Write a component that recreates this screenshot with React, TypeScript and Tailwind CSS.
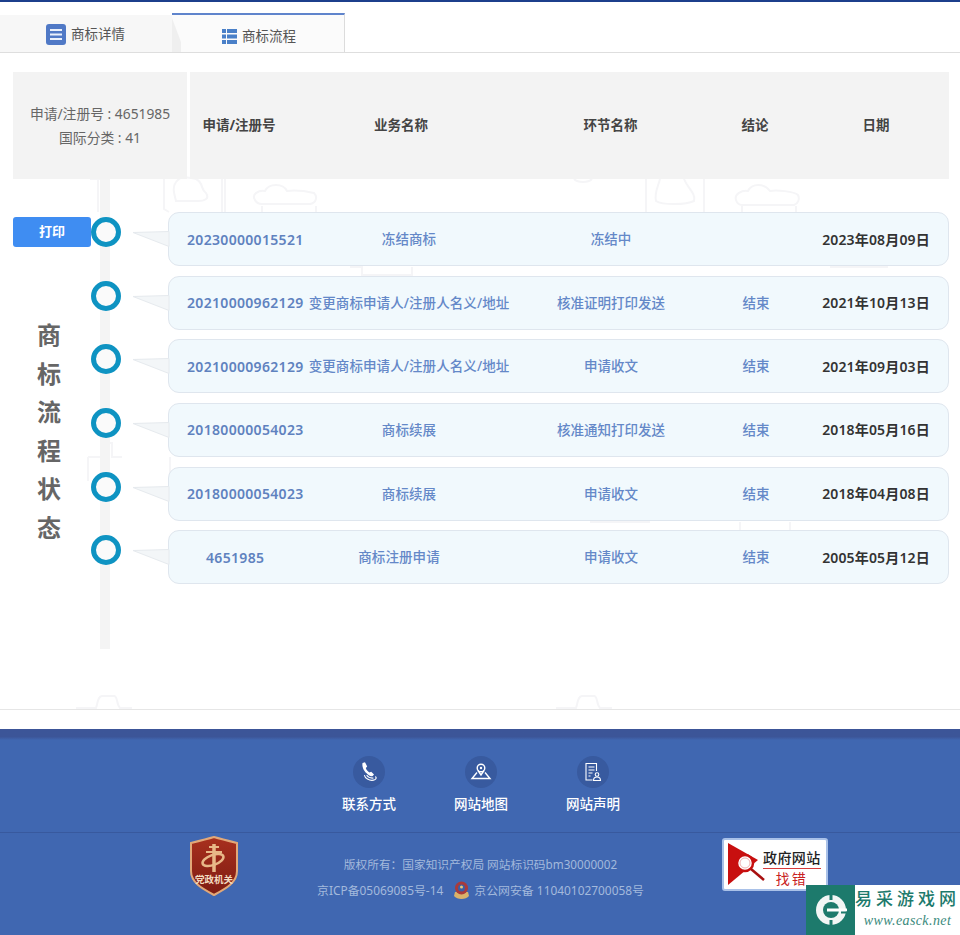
const font = "font-['Noto_Sans','Noto_Sans_CJK_SC',sans-serif]";

const rows = [
  { no: "20230000015521", pad: "pl-[18px]", biz: "冻结商标", bizPad: "", step: "冻结中", end: "", date: "2023年08月09日" },
  { no: "20210000962129", pad: "pl-[18px]", biz: "变更商标申请人/注册人名义/地址", bizPad: "", step: "核准证明打印发送", end: "结束", date: "2021年10月13日" },
  { no: "20210000962129", pad: "pl-[18px]", biz: "变更商标申请人/注册人名义/地址", bizPad: "", step: "申请收文", end: "结束", date: "2021年09月03日" },
  { no: "20180000054023", pad: "pl-[18px]", biz: "商标续展", bizPad: "", step: "核准通知打印发送", end: "结束", date: "2018年05月16日" },
  { no: "20180000054023", pad: "pl-[18px]", biz: "商标续展", bizPad: "", step: "申请收文", end: "结束", date: "2018年04月08日" },
  { no: "4651985", pad: "pl-[37px]", biz: "商标注册申请", bizPad: "pr-[20px]", step: "申请收文", end: "结束", date: "2005年05月12日" },
];

function Watermark() {
  return (
    <svg className="absolute left-0 top-0" width="960" height="660" fill="none" stroke="#f5f5f7" strokeWidth="2">
      <g transform="translate(0 19)">
        <path d="M90 107h18M98 107v33" />
        <path d="M164 107v30l5 3M222 107v33M225 107v33" />
        <path d="M176 110c6-8 12-4 20-3 8 4 4 10 10 14 4 6-2 8-8 8h-22c-2-8-4-14 0-19z" />
        <path d="M255 128c-4-6 4-10 10-9 4-8 18-8 22 0 8-1 18 0 27 2 4 4 2 10-4 11h-48c-4 0-6-2-7-4zM262 134v6M316 134v6" />
        <path d="M574 107c4 4 14 4 18 0" />
        <path d="M646 107v33M704 107v33" />
        <path d="M660 107c-2 8-6 14-4 22 6 4 30 4 38 0 2-8-6-12-10-22" />
        <path d="M736 128c-2-6 6-10 12-9 4-8 16-8 22 0 6-1 24 0 28 4 2 4 0 9-4 10h-52c-3 0-5-2-6-5zM742 134v6M796 134v6" />
        <path d="M350 195h12v8h50v-8M830 195h58" />
        <path d="M88 385h16v-14h8v14h10M88 385v24M170 385v30" />
        <path d="M740 450v20M790 450v20M590 450h60" />
      </g>
      <path d="M76 655h20c2-6 2-12 6-12h12c4 0 2 8 6 12h12M556 655h20c2-6 2-12 6-12h12c4 0 2 8 6 12h12" />
    </svg>
  );
}

function Arrow() {
  return (
    <svg className="absolute left-[-37px] top-[17px]" width="38" height="18">
      <path d="M1 2.500L37 1.500V16.500Z" fill="#f3f6f8" stroke="#e6eaee" />
    </svg>
  );
}

function Row({ row, first }: { row: (typeof rows)[number]; first: boolean }) {
  return (
    <div className="flex items-start">
      <div className="w-[78px] pt-[5px]">
        {first && (
          <button className="h-[30px] w-[78px] rounded-[3px] bg-[#3f8df2] text-[13px] font-bold text-white">打印</button>
        )}
      </div>
      <div className="z-10 mt-[5px] h-[30px] w-[30px] rounded-full border-[5px] border-[#0e93c2] bg-[#fafafa]" />
      <div className="w-[47px]" />
      <div className="relative grid h-[54px] w-[781px] grid-cols-[135px_210px_194px_96px_144px] items-center rounded-[11px] border border-[#dfe6ee] bg-[#f1f9fd] text-center text-[13.5px] font-medium text-[#6488c8]">
        <Arrow />
        <div className={`whitespace-nowrap text-left text-[14px] font-semibold tracking-[0.32px] text-[#5f82bf] ${row.pad}`}>{row.no}</div>
        <div className={`whitespace-nowrap tracking-[0.08px] ${row.bizPad}`}>{row.biz}</div>
        <div>{row.step}</div>
        <div>{row.end}</div>
        <div className="whitespace-nowrap text-[14px] font-semibold tracking-[0.15px] text-[#333]">{row.date}</div>
      </div>
    </div>
  );
}

function ListIcon() {
  return (
    <svg width="20" height="21" viewBox="0 0 20 21">
      <rect width="20" height="21" rx="3" fill="#5079c6" />
      <path d="M4 6h12M4 10.500h12M4 15h12" stroke="#eaf0fb" strokeWidth="1.800" />
    </svg>
  );
}

function TableIcon() {
  return (
    <svg width="15" height="15" viewBox="0 0 15 15" fill="#4a80c8">
      <rect y="0" width="4" height="4" />
      <rect x="5" y="0" width="10" height="4" />
      <rect y="5.500" width="4" height="4" />
      <rect x="5" y="5.500" width="10" height="4" />
      <rect y="11" width="4" height="4" />
      <rect x="5" y="11" width="10" height="4" />
    </svg>
  );
}

function PhoneGlyph() {
  return (
    <svg width="18" height="20" viewBox="0 0 18 20" fill="none" stroke="#fff" strokeWidth="1.200" strokeLinecap="round">
      <path fill="#fff" stroke="none" d="M2.500 1l2.500-.7 2.200 4.200-1.400 1.600c.7 2 1.800 3.400 3.600 4.500l1.800-.9 2.800 2.800-1.300 1.500c-2 .7-4.200-.5-6.400-2.900C3.900 8.800 1.800 5 2.500 1z" />
      <path d="M4.500 13.500c.5 2.500 4.500 5.500 9 4.700 2.500-.5 3.200-2.200 2.200-3.400M7 13.500c1 1.500 3 2.700 6 2.500" />
    </svg>
  );
}

function MapGlyph() {
  return (
    <svg width="22" height="18" viewBox="0 0 22 18" fill="none" stroke="#fff" strokeWidth="1.400">
      <circle cx="11" cy="5" r="3.800" />
      <circle cx="11" cy="5" r="1.200" fill="#fff" stroke="none" />
      <path d="M8 7.500L11 12l3-4.500" />
      <path d="M7 9.500L2 15.500h18L15 9.500" />
    </svg>
  );
}

function DocGlyph() {
  return (
    <svg width="18" height="20" viewBox="0 0 18 20" fill="none" stroke="#fff" strokeWidth="1.100">
      <path d="M8.500 18H2V1.500h10.500V9" />
      <path d="M4.500 5h6M4.500 8h6M4.500 11h4M4.500 14h2" />
      <circle cx="13" cy="12.500" r="1.800" />
      <path d="M9.500 18.500c0-4.600 7-4.600 7 0z" />
    </svg>
  );
}

function Shield() {
  return (
    <div className="relative h-[60px] w-[50px]">
      <svg width="50" height="60" viewBox="0 0 50 60" fill="none">
        <defs>
          <linearGradient id="shield" x1="0" y1="0" x2="0" y2="1">
            <stop offset="0" stopColor="#a8301e" />
            <stop offset="1" stopColor="#7e1c12" />
          </linearGradient>
        </defs>
        <path d="M2 7C10 5 18 3 25 1c7 2 15 4 23 6v28c0 12-12 18-23 24C14 53 2 47 2 35z" fill="url(#shield)" stroke="#e2a878" strokeWidth="2" />
        <path d="M25 8v28" stroke="#e8b888" strokeWidth="3.500" />
        <path d="M20 11h10M17 16h16" stroke="#e8b888" strokeWidth="1.800" />
        <ellipse cx="24" cy="24" rx="11" ry="5" stroke="#e8b888" strokeWidth="2.500" transform="rotate(-20 24 24)" />
      </svg>
      <span className="absolute left-0 top-[38px] w-[50px] text-center text-[9.5px] font-bold leading-[12px] text-[#f3dcc0]">党政机关</span>
    </div>
  );
}

function PoliceBadge() {
  return (
    <svg width="17" height="19" viewBox="0 0 17 19" className="inline-block">
      <path d="M1 15c3 4 12 4 15 0l-1-4H2z" fill="#d9b26a" />
      <circle cx="8.500" cy="7" r="6.500" fill="#a93a3a" />
      <circle cx="8.500" cy="7" r="3.500" fill="#3a5fa6" />
      <circle cx="8.500" cy="6" r="1.500" fill="#e8c878" />
    </svg>
  );
}

function GovBadge() {
  return (
    <div className="flex h-[53px] w-[106px] rounded-[3px] border-2 border-[#a9c1e8] bg-white">
      <svg width="36" height="49" viewBox="0 0 36 49" className="ml-[3px] shrink-0 overflow-visible">
        <path d="M1 3L31 20 1 45z" fill="#c80f0f" />
        <circle cx="18" cy="23" r="8" fill="#fff" stroke="#c80f0f" strokeWidth="2.500" />
        <circle cx="18" cy="23" r="5" fill="#fff" stroke="#eeb0b0" strokeWidth="1" />
        <path d="M24 29l13 11" stroke="#a81010" strokeWidth="2.500" />
      </svg>
      <div className="flex flex-col items-center pt-[9px] text-center">
        <div className="whitespace-nowrap border-b border-[#d63a3a] pb-[1px] text-[14px] font-medium leading-[18px] tracking-[0.4px] text-[#222]">政府网站</div>
        <div className="text-[14px] leading-[20px] tracking-[2px] text-[#c82020]">找错</div>
      </div>
    </div>
  );
}

function SiteLogo() {
  return (
    <div className="absolute bottom-0 right-0 flex h-[50px] w-[154px] bg-white">
      <div className="flex w-[49px] items-center justify-center bg-[#1d7a6c]">
        <svg width="32" height="32" viewBox="0 0 32 32">
          <circle cx="16" cy="16" r="15" fill="#f2f6f5" />
          <circle cx="16" cy="16" r="8" fill="#1d7a6c" />
          <rect x="14.500" y="0" width="3" height="6" fill="#1d7a6c" />
          <rect x="14.500" y="26" width="3" height="6" fill="#1d7a6c" />
          <rect x="12" y="14.500" width="20" height="3" fill="#fff" />
          <rect x="26" y="17.500" width="6" height="2" fill="#1d7a6c" />
        </svg>
      </div>
      <div className="flex flex-1 flex-col items-center pt-[1px] text-[#1d7a6c]">
        <div className="whitespace-nowrap text-[17px] font-medium leading-[26px] tracking-[4px]">易采游戏网</div>
        <div className="font-['Liberation_Serif',serif] text-[14px] italic leading-[18px] tracking-[0.4px] text-[#3a8a7c]">www.easck.net</div>
      </div>
    </div>
  );
}

const footerLinks = [
  { label: "联系方式", icon: <PhoneGlyph /> },
  { label: "网站地图", icon: <MapGlyph /> },
  { label: "网站声明", icon: <DocGlyph /> },
];

export default function App() {
  return (
    <div className={`relative h-[935px] w-[960px] overflow-hidden bg-white ${font}`}>
      <div className="h-[2px] bg-[#1c3f8c]" />

      <div className="flex h-[51px] items-end border-b border-[#dedede]">
        <div className="flex h-[37px] w-[172px] items-center bg-[#f7f7f7] pl-[46px] pt-[2px] text-[13.5px] text-[#555]">
          <ListIcon />
          <span className="ml-[5px]">商标详情</span>
        </div>
        <div className="relative flex h-[39px] w-[173px] items-center border-r border-t-[2px] border-r-[#dcdcdc] border-t-[#5f84cc] bg-[#fbfbfb] pl-[50px] pt-[5px] text-[13.5px] text-[#555]">
          <svg className="absolute left-0 top-[3px]" width="10" height="34">
            <path d="M0 0L9 24V34H0Z" fill="#efefef" />
          </svg>
          <TableIcon />
          <span className="ml-[5px]">商标流程</span>
        </div>
      </div>

      <div className="relative h-[656px]">
        <Watermark />
        <div className="absolute left-[100px] top-[120px] h-[476px] w-[10px] bg-[#f4f4f4]" />
        <div className="absolute left-[37px] top-[263px] flex w-[24px] flex-col text-[24px] font-bold leading-[38.5px] text-[#666]">
          {"商标流程状态".split("").map((c, i) => (
            <span key={i}>{c}</span>
          ))}
        </div>

        <div className="relative pl-[13px] pt-[19px]">
          <div className="flex h-[107px] gap-[3px]">
            <div className="flex w-[174px] flex-col items-center justify-center bg-[#f3f3f3] text-[13.8px] leading-[24px] text-[#666]">
              <div>申请/注册号 : 4651985</div>
              <div>国际分类 : 41</div>
            </div>
            <div className="grid w-[759px] grid-cols-[98px_226px_193px_96px_146px] items-center bg-[#f3f3f3] text-center text-[13.5px] font-bold text-[#444]">
              <div>申请/注册号</div>
              <div>业务名称</div>
              <div>环节名称</div>
              <div>结论</div>
              <div>日期</div>
            </div>
          </div>

          <div className="mt-[33px] flex flex-col gap-y-[9.67px]">
            {rows.map((row, i) => (
              <Row key={i} row={row} first={i === 0} />
            ))}
          </div>
        </div>
      </div>

      <div className="h-[20px] border-t border-[#e6e6e6]" />

      <div className="h-[206px] bg-[#4067b1] text-white">
        <div className="h-[11px] bg-gradient-to-b from-[#3c5598] via-[#3c5598] via-70% to-[#4067b1]" />
        <div className="flex h-[93px] justify-center border-b border-[#38599e] pl-[2px] pt-[16px]">
          {footerLinks.map((l) => (
            <div key={l.label} className="flex w-[112px] flex-col items-center">
              <div className="flex h-[32px] w-[32px] items-center justify-center rounded-full bg-[#385a9f]">{l.icon}</div>
              <div className="mt-[6px] text-[13.5px] font-medium leading-[20px]">{l.label}</div>
            </div>
          ))}
        </div>
        <div className="flex items-start pl-[189px]">
          <div className="mt-[3px]">
            <Shield />
          </div>
          <div className="w-[483px] pt-[18px] text-center text-[11.9px] leading-[26px] text-[#a3b9dc]">
            <div className="text-[11.7px]">版权所有：国家知识产权局 网站标识码bm30000002</div>
            <div className="flex items-center justify-center">
              <span>京ICP备05069085号-14</span>
              <span className="ml-[10px] mr-[4px] flex">
                <PoliceBadge />
              </span>
              <span>京公网安备 11040102700058号</span>
            </div>
          </div>
          <div className="mt-[5px]">
            <GovBadge />
          </div>
        </div>
      </div>

      <SiteLogo />
    </div>
  );
}
